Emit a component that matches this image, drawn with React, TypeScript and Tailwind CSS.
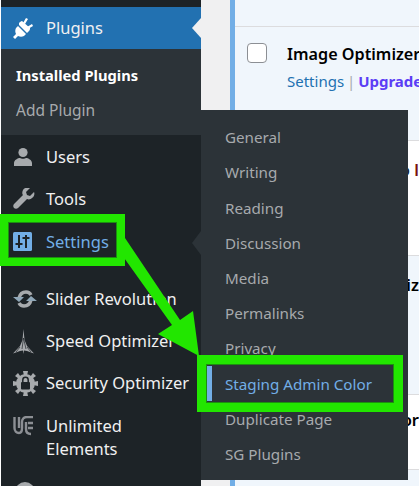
import React from "react";

const font = { fontFamily: '"Noto Sans", sans-serif' };

function MainItem({ icon, label, active, h = "h-[42px]" }: { icon: React.ReactNode; label: string; active?: boolean; h?: string }) {
  return (
    <div className={`flex ${h} items-center pl-[12px] ${active ? "text-[#72aee6]" : "text-[#f0f0f1]"}`}>
      <span className="flex w-[33px] shrink-0 items-center">{icon}</span>
      <span className="text-[16.5px] leading-[24px] whitespace-nowrap">{label}</span>
    </div>
  );
}

function Flyout({ label, active }: { label: string; active?: boolean }) {
  return (
    <div className={`flex h-[35.2px] items-center pl-[24px] text-[15.2px] whitespace-nowrap ${active ? "text-[#72aee6]" : "text-[#a7aaad]"}`}>
      {label}
    </div>
  );
}

const gray = "#a7aaad";

const PluginIcon = () => (
  <svg width="22" height="22" viewBox="0 0 22 22" fill="#fff">
    <path d="M0 20l3-3c-1-2-1-4 0-6l2-2 8 8-2 2c-2 1-4 1-6 0l-3 3z" />
    <path d="M6 8l8 8 2-2c1-1 1-2 1-3L9 4C8 4 7 5 6 6z" />
    <path d="M10 6l3-5 2 1-3 5zM14 10l5-3 1 2-5 3z" />
  </svg>
);
const UserIcon = () => (
  <svg width="20" height="20" viewBox="0 0 20 20" fill={gray}>
    <circle cx="10" cy="5.5" r="4.6" />
    <path d="M1 19v-3c0-3 4-5 6-5 1 1 5 1 6 0 2 0 6 2 6 5v3z" />
  </svg>
);
const WrenchIcon = () => (
  <svg width="22" height="22" viewBox="0 0 22 22" fill={gray}>
    <path d="M21 4l-4 4-3-1-1-3 4-4c-3-1-6 0-7 2-1 2-1 4 0 5L1 16c-1 1-1 3 0 4s3 1 4 0l9-9c2 1 4 0 5-1 2-1 3-4 2-6z" />
  </svg>
);
const SettingsIcon = () => (
  <svg width="19" height="19" viewBox="0 0 19 19">
    <rect width="19" height="19" rx="1.5" fill="#72aee6" />
    <path d="M6 3v13M13 3v13M2.5 12h7M9.5 6h7" stroke="#1d2327" strokeWidth="2" fill="none" />
  </svg>
);
const RefreshIcon = () => (
  <svg width="24" height="20" viewBox="0 0 24 20" fill="none">
    <path d="M6 9c1-4 4-6 7-6 2 0 4 1 5 3" stroke={gray} strokeWidth="3.4" />
    <path d="M18 11c-1 4-4 6-7 6-2 0-4-1-5-3" stroke={gray} strokeWidth="3.4" />
    <path d="M0 8h11l-5 5zM24 12H13l5-5z" fill="#8fa7b8" />
  </svg>
);
const SpeedIcon = () => (
  <svg width="21" height="25" viewBox="0 0 21 25" fill={gray}>
    <path d="M10.5 0L11.5 11L14 17L21 24.5L14 22L11 21.5L10.5 25L10 21.5L7 22L0 24.5L7 17L9.5 11z" />
    <path d="M10.5 9L9 20M10.5 9L13 20M7 18L3 23M14 18L18 23" stroke="#1d2327" strokeWidth="0.7" fill="none" />
  </svg>
);
const GearLockIcon = () => (
  <svg width="25" height="25" viewBox="0 0 25 25">
    <circle cx="12.5" cy="12.5" r="9.5" fill={gray} />
    <path d="M12.5 12.5L10 0h5zM12.5 12.5L10 25h5zM12.5 12.5L0 10v5zM12.5 12.5L25 10v5zM12.5 12.5L2 5l3-3zM12.5 12.5L23 5l-3-3zM12.5 12.5L2 20l3 3zM12.5 12.5L23 20l-3 3z" fill={gray} />
    <rect x="8" y="11" width="9" height="7.5" rx="1" fill="#1d2327" />
    <path d="M9.8 11V9a2.7 2.7 0 015.4 0v2" stroke="#1d2327" strokeWidth="1.5" fill="none" />
  </svg>
);
const UeIcon = () => (
  <svg width="21" height="20" viewBox="0 0 21 20" fill="none" stroke="#8c8f94" strokeWidth="2.4">
    <path d="M1.5 1v11c0 3 2 5 4.5 5s3-2 3-5V6c0-3 2-5 5-5h6" />
    <path d="M6 1v11M13 6v7c0 3 2 5 5 5" />
    <path d="M15 7h5M15 12h5" />
  </svg>
);

function Row({ h, bg, pt, tail }: { h: string; bg: string; pt: string; tail: React.ReactNode }) {
  return (
    <div className={`${h} ${bg} ${pt} border-b border-[#dcdcde] overflow-hidden text-right text-[16.5px] leading-[22px] font-semibold whitespace-nowrap`}>
      {tail}
    </div>
  );
}

export default function App() {
  return (
    <div className="relative flex h-[486px] w-[419px] overflow-hidden bg-[#f0f0f1]" style={font}>
      <div className="w-px bg-white" />
      {/* main admin menu */}
      <div className="flex w-[200px] shrink-0 flex-col bg-[#1d2327] pt-[7px]">
        <div className="relative">
          <MainItem icon={<PluginIcon />} label="Plugins" h="h-[42px] bg-[#2271b1]" />
          <span className="absolute right-0 top-[11px] h-0 w-0 border-y-[10px] border-r-[9px] border-y-transparent border-r-[#f0f0f1]" />
        </div>
        <div className="flex h-[86px] flex-col justify-center gap-[11px] bg-[#2c3338] pl-[15px] text-[15.5px] leading-[24px]">
          <div className="text-[14.7px] font-bold text-white">Installed Plugins</div>
          <div className="text-[#a7aaad]">Add Plugin</div>
        </div>
        <div className="h-[1px]" />
        <MainItem icon={<UserIcon />} label="Users" />
        <MainItem icon={<WrenchIcon />} label="Tools" />
        <MainItem icon={<SettingsIcon />} label="Settings" active h="h-[43px]" />
        <div className="h-[15px]" />
        <MainItem icon={<RefreshIcon />} label="Slider Revolution" />
        <MainItem icon={<SpeedIcon />} label="Speed Optimizer" />
        <MainItem icon={<GearLockIcon />} label="Security Optimizer" />
        <div className="flex pl-[12px] pt-[10px] text-[16.5px] leading-[23px] text-[#f0f0f1]">
          <span className="w-[33px] shrink-0 pt-[2px]"><UeIcon /></span>
          <span>Unlimited<br />Elements</span>
        </div>
      </div>
      {/* content */}
      <div className="min-w-0 flex-1 pl-[29px]">
        <div className="h-full border-l-[5px] border-[#72aee6] bg-[#f0f6fc]">
          <div className="h-[27px] border-b border-[#dcdcde] bg-[#f0f6fc]" />
          <div className="h-[114px] overflow-hidden border-b border-[#dcdcde] bg-[#f0f6fc] pl-[12px] pt-[16px]">
            <div className="flex items-start">
              <span className="mr-[20px] h-[20px] w-[20px] shrink-0 rounded-[4px] border border-[#8c8f94] bg-white" />
              <div className="whitespace-nowrap">
                <div className="text-[16.2px] leading-[22px] font-semibold text-black">Image Optimizer</div>
                <div className="mt-[5px] text-[15px] leading-[22px] text-[#2271b1]">
                  Settings <span className="mx-[-1px] text-[#a7aaad]">|</span> <span className="font-bold text-[#5b3df5]">Upgrade</span>
                </div>
              </div>
            </div>
          </div>
          <Row h="h-[115px]" bg="bg-white" pt="pt-[18px]" tail={<span className="text-[#1d2327]">to <span className="text-[#7a1010]">l</span></span>} />
          <Row h="h-[139px]" bg="bg-[#f0f6fc]" pt="pt-[18px]" tail={<span className="text-black">Optimiz</span>} />
          <Row h="h-[75px]" bg="bg-white" pt="pt-[14px]" tail={<span className="text-black">Vendor</span>} />
        </div>
      </div>
      {/* flyout submenu */}
      <div className="absolute left-[201px] top-[110px] h-[370px] w-[207px] bg-[#2c3338] pt-[10px]">
        <span className="absolute left-[-9px] top-[121px] h-0 w-0 border-y-[12px] border-r-[9px] border-y-transparent border-r-[#2c3338]" />
        {["General", "Writing", "Reading", "Discussion", "Media", "Permalinks", "Privacy"].map((l) => (
          <Flyout key={l} label={l} />
        ))}
        <Flyout label="Staging Admin Color" active />
        <Flyout label="Duplicate Page" />
        <Flyout label="SG Plugins" />
      </div>
      {/* annotation */}
      <div className="absolute left-0 top-[214px] h-[52px] w-[125px] border-[8px] border-[#22e600] ring-1 ring-inset ring-[#1c8f10]" />
      <div className="absolute left-[197px] top-[355px] h-[57px] w-[206px] border-[9px] border-[#22e600] ring-1 ring-inset ring-[#1c8f10]" />
      <div className="absolute left-[207px] top-[366px] h-[35px] w-[5px] bg-[#72aee6]" />
      <svg className="absolute left-0 top-0" width="419" height="486" viewBox="0 0 419 486">
        <polygon points="125,238 180,320 193,311 199,356 158,334 172,325 122,255" fill="#22e600" />
      </svg>
      <div className="absolute left-[15px] top-[482px] h-[20px] w-[20px] rounded-full bg-[#a7aaad]" />
    </div>
  );
}
